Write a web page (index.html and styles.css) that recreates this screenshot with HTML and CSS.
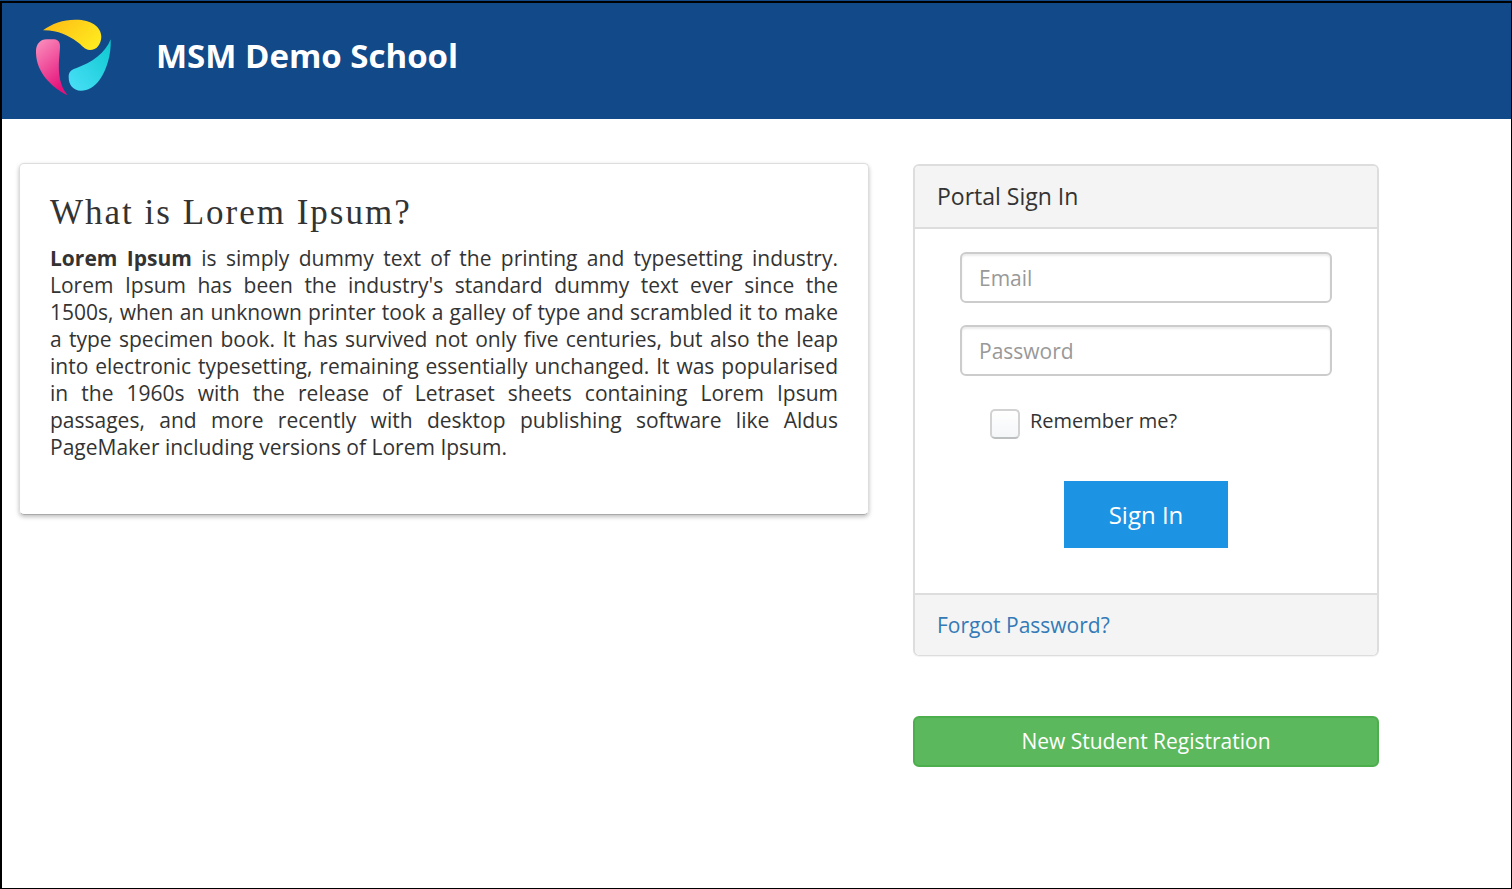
FILE: index.html
```html
<!DOCTYPE html>
<html lang="en">

<head>
    <meta charset="UTF-8">
    <meta name="viewport" content="width=device-width, initial-scale=1.0">
    <title>MSM Demo School</title>
    <link rel="stylesheet" href="styles.css">
</head>

<body>
    <div class="page">
        <header class="header">
            <svg class="logo" viewBox="105 57 231 231" aria-hidden="true">
                <defs>
                    <linearGradient id="yellow" x1="0" y1="0" x2="1" y2="0.6">
                        <stop offset="0" stop-color="#fdb913" />
                        <stop offset="1" stop-color="#ffe81f" />
                    </linearGradient>
                    <linearGradient id="pink" x1="0" y1="0" x2="0.5" y2="1">
                        <stop offset="0" stop-color="#fb93bf" />
                        <stop offset="1" stop-color="#e5127b" />
                    </linearGradient>
                    <linearGradient id="cyan" x1="0" y1="1" x2="1" y2="0">
                        <stop offset="0" stop-color="#4be0f8" />
                        <stop offset="1" stop-color="#0cc8cf" />
                    </linearGradient>
                </defs>
                <path fill="url(#yellow)"
                    d="M129 91C155 71 190 59 225 59C272 58 304 80 304 110C303 133 290 150 270 150C252 149 247 136 232 126C205 106 173 90 129 91Z" />
                <path fill="url(#pink)"
                    d="M140 118H163C175 119 181 127 180 143L177 180C175 219 178 257 203 286C153 261 109 216 108 158C107 132 121 118 140 118Z" />
                <path fill="url(#cyan)"
                    d="M332 118C334 166 320 209 300 238C282 263 264 272 243 272C219 271 206 255 206 230C206 216 214 209 228 205C276 187 316 160 332 118Z" />
            </svg>
            <h1 class="school-name">MSM Demo School</h1>
        </header>

        <main class="content">
            <section class="card">
                <h2 class="card-title">What is Lorem Ipsum?</h2>
                <p class="card-text"><strong>Lorem Ipsum</strong> is simply dummy text of the printing and typesetting
                    industry. Lorem Ipsum has been the industry's standard dummy text ever since the 1500s, when an
                    unknown printer took a galley of type and scrambled it to make a type specimen book. It has survived
                    not only five centuries, but also the leap into electronic typesetting, remaining essentially
                    unchanged. It was popularised in the 1960s with the release of Letraset sheets containing Lorem
                    Ipsum passages, and more recently with desktop publishing software like Aldus PageMaker including
                    versions of Lorem Ipsum.</p>
            </section>

            <div class="sidebar">
                <form class="panel">
                    <h3 class="panel-heading">Portal Sign In</h3>
                    <div class="panel-body">
                        <input class="form-control" type="email" placeholder="Email" aria-label="Email">
                        <input class="form-control" type="password" placeholder="Password" aria-label="Password">
                        <div class="remember">
                            <input class="checkbox" type="checkbox" id="remember">
                            <label for="remember">Remember me?</label>
                        </div>
                        <button class="btn-signin" type="submit">Sign In</button>
                    </div>
                    <div class="panel-footer">
                        <a href="#">Forgot Password?</a>
                    </div>
                </form>
                <button class="btn-register" type="button">New Student Registration</button>
            </div>
        </main>
    </div>
</body>

</html>
```
FILE: styles.css
```css
:root {
    --navy: #124988;
    --blue: #1c93e3;
    --link: #337ab7;
    --green: #5cb85c;
    --text: #333333;
    --border: #dddddd;
    --panel-bg: #f4f4f4;
}

* {
    margin: 0;
    padding: 0;
    box-sizing: border-box;
}

body {
    font-family: "Open Sans", "Noto Sans", sans-serif;
    font-size: 21px;
    line-height: 27px;
    color: var(--text);
    background-color: #ffffff;
    border-top: 1px solid var(--navy);
    min-height: 100vh;
    display: flex;
}

.page {
    flex: 1;
    border: 1px solid #000000;
    border-top-width: 2px;
    border-left-width: 2px;
}

.header {
    display: flex;
    gap: 44px;
    height: 116px;
    padding: 16px 33px;
    background-color: var(--navy);
}

.logo {
    width: 77px;
    height: 77px;
}

.school-name {
    font-size: 33px;
    line-height: 44px;
    padding-top: 15px;
    font-weight: 700;
    color: #ffffff;
}

.content {
    display: grid;
    grid-template-columns: 850fr 466fr;
    gap: 44px;
    align-items: start;
    padding: 44px 132px 44px 17px;
}

.card {
    min-height: 352px;
    padding: 30px;
    border: 1px solid #dddddd;
    border-radius: 5px;
    border-bottom-color: #aaaaaa;
    box-shadow: 0 2px 4px rgba(0, 0, 0, 0.25);
}

.card-title {
    font-family: "Liberation Serif", "Times New Roman", serif;
    font-size: 35px;
    font-weight: 400;
    line-height: 38px;
    letter-spacing: 2px;
    margin-bottom: 13px;
}

.card-text {
    text-align: justify;
}

.sidebar {
    padding-top: 1px;
}

.panel {
    border: 2px solid var(--border);
    border-bottom-width: 1px;
    border-radius: 6px;
    box-shadow: 0 1px 1px rgba(0, 0, 0, 0.05);
    overflow: hidden;
    margin-bottom: 60px;
}

.panel-heading {
    font-size: 23px;
    font-weight: 500;
    line-height: 27px;
    padding: 17px 22px;
    background-color: var(--panel-bg);
    border-bottom: 2px solid var(--border);
}

.panel-body {
    display: flex;
    flex-direction: column;
    padding: 23px 45px 45px;
}

.form-control {
    width: 100%;
    height: 51px;
    padding: 0 17px;
    margin-bottom: 22px;
    font: inherit;
    color: #555555;
    border: 2px solid #cccccc;
    border-radius: 6px;
    box-shadow: inset 0 2px 2px rgba(0, 0, 0, 0.08);
}

.form-control::placeholder {
    color: #999999;
    opacity: 1;
}

.remember {
    display: flex;
    align-items: flex-start;
    gap: 10px;
    height: 83px;
    padding: 11px 30px 0;
    font-size: 20px;
    line-height: 24px;
}

.checkbox {
    appearance: none;
    width: 30px;
    height: 30px;
    background: linear-gradient(#ffffff, #f4f6f8);
    border: 2px solid #d2d2d2;
    border-bottom-color: #bcbfc0;
    border-radius: 5px;
}

.btn-signin {
    align-self: center;
    height: 67px;
    padding: 0 45px;
    font: inherit;
    font-size: 24px;
    color: #ffffff;
    background-color: var(--blue);
    border: none;
}

.panel-footer {
    padding: 17px 22px 16px;
    background-color: var(--panel-bg);
    border-top: 2px solid var(--border);
}

.panel-footer a {
    color: var(--link);
    text-decoration: none;
}

.btn-register {
    display: block;
    width: 100%;
    height: 51px;
    font: inherit;
    color: #ffffff;
    background-color: var(--green);
    border: 2px solid #4cae4c;
    border-radius: 6px;
}

@media (max-width: 992px) {
    .content {
        grid-template-columns: 1fr;
        padding: 24px;
    }
}
```
